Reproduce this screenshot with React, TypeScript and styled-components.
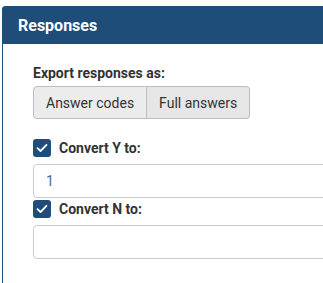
import styled, { createGlobalStyle } from 'styled-components';

const GlobalStyle = createGlobalStyle`
  html, body {
    margin: 0;
    padding: 0;
    background: #ffffff;
    overflow: hidden;
    font-family: Roboto, "Liberation Sans", Arial, sans-serif;
  }
`;

const Page = styled.div`
  padding: 6px 0 0 2px;
  width: 323px;
  height: 283px;
  box-sizing: border-box;
  overflow: hidden;
`;

const Panel = styled.section`
  width: 420px;
  height: 300px;
  border-left: 1px solid #1f4d7a;
  border-top-left-radius: 4px;
  background: #ffffff;
`;

const Header = styled.div`
  height: 38px;
  background-color: #1f4d7a;
  border-top-left-radius: 4px;
  display: flex;
  align-items: center;
  padding-left: 16px;
  color: #ffffff;
  font-size: 16px;
  font-weight: bold;
  margin-left: -1px;
`;

const Body = styled.div`
  padding: 19px 0 0 30px;
  display: flex;
  flex-direction: column;
`;

const Label = styled.div`
  color: #333333;
  font-size: 14px;
  font-weight: bold;
  line-height: 20px;
  margin-bottom: 3px;
`;

const ButtonGroup = styled.div`
  display: flex;
  margin-bottom: 20px;
`;

const GroupButton = styled.button<{ active?: boolean }>`
  height: 33px;
  padding: 0 12px;
  font-family: inherit;
  font-size: 14px;
  color: #333333;
  background-color: ${(props) => (props.active ? '#ececec' : '#e6e6e6')};
  border: 1px solid #bdbdbd;
  cursor: pointer;

  &:first-child {
    border-radius: 4px 0 0 4px;
  }
  &:last-child {
    border-radius: 0 4px 4px 0;
    border-left: none;
  }
`;

const CheckRow = styled.label`
  display: flex;
  align-items: center;
  gap: 8px;
  height: 18px;
  margin-bottom: 7px;
  color: #333333;
  font-size: 14px;
  font-weight: bold;
`;

const Box = styled.span`
  width: 18px;
  height: 18px;
  border-radius: 3px;
  background-color: #1f4d7a;
  display: flex;
  align-items: center;
  justify-content: center;
`;

const TextInput = styled.input`
  box-sizing: border-box;
  width: 100%;
  height: 34px;
  border: 1px solid #cccccc;
  border-radius: 4px;
  padding: 0 12px;
  font-family: inherit;
  font-size: 14px;
  color: #4d6a88;
  margin-bottom: 2px;
  outline: none;
`;

function Check({ label }: { label: string }) {
  return (
    <CheckRow>
      <Box>
        <svg width="12" height="10" viewBox="0 0 12 10">
          <path d="M1.5 5.2 L4.5 8 L10.5 1.8" fill="none" stroke="#ffffff" strokeWidth="1.8" strokeLinecap="round" strokeLinejoin="round" />
        </svg>
      </Box>
      {label}
    </CheckRow>
  );
}

export default function App() {
  return (
    <Page>
      <GlobalStyle />
      <Panel>
        <Header>Responses</Header>
        <Body>
          <Label>Export responses as:</Label>
          <ButtonGroup>
            <GroupButton active>Answer codes</GroupButton>
            <GroupButton>Full answers</GroupButton>
          </ButtonGroup>
          <Check label="Convert Y to:" />
          <TextInput defaultValue="1" />
          <Check label="Convert N to:" />
          <TextInput defaultValue="" />
        </Body>
      </Panel>
    </Page>
  );
}
